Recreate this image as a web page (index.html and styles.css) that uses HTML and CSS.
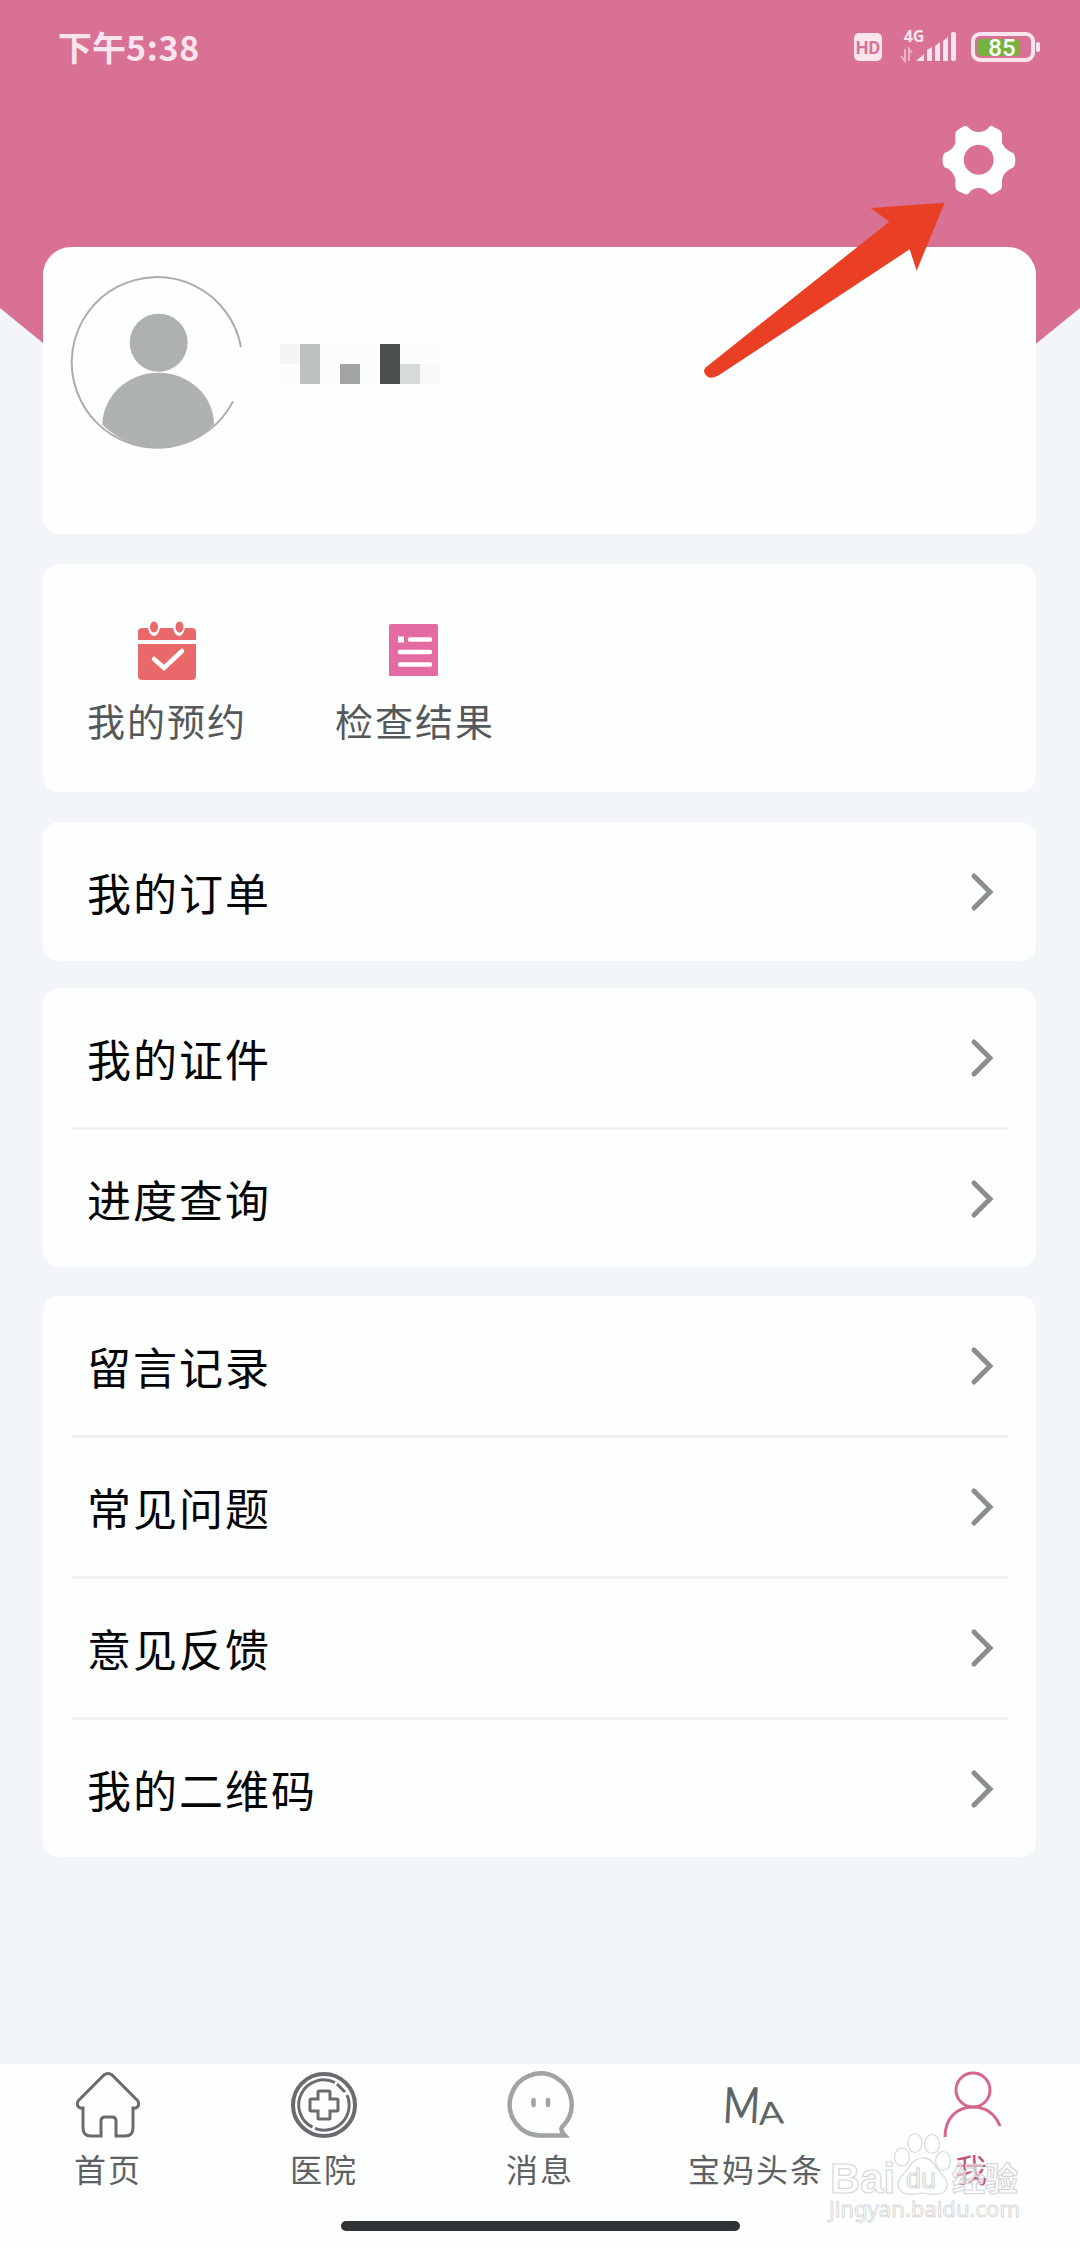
FILE: index.html
```html
<!DOCTYPE html>
<html lang="zh-CN">

<head>
    <meta charset="UTF-8">
    <meta name="viewport" content="width=device-width, initial-scale=1.0">
    <title>我</title>
    <link rel="stylesheet" href="styles.css">
</head>

<body>
    <header class="header">
        <div class="status">
            <span class="time">下午<span class="num">5:38</span></span>
            <svg class="status-icons" width="188" height="36" viewBox="0 0 188 36">
                <rect x="1" y="4" width="28" height="28" rx="5" fill="#fae4ee"/>
                <text x="15" y="24.5" class="hd">HD</text>
                <text x="61" y="13" class="net">4G</text>
                <path d="M52 20v12l-4-5M56 32V20l3 4" fill="none" stroke="#eeb3c9" stroke-width="2"/>
                <path d="M63 32l8-7v7zM74 32V21l5-3v14zM82 32V17l5-4v19zM90 32V12l5-4v24z" fill="#fae4ee"/>
                <rect x="98" y="3" width="5" height="29" rx="2" fill="#fae4ee"/>
                <rect x="120" y="5" width="60" height="26" rx="7" fill="none" stroke="#fae4ee" stroke-width="4"/>
                <rect x="125" y="10" width="41" height="17" rx="3" fill="#76b33e"/>
                <rect x="183" y="13" width="4" height="10" rx="2" fill="#fae4ee"/>
                <text x="149" y="26.5" class="power">85</text>
            </svg>
        </div>
        <svg class="gear" width="74" height="70" viewBox="428 376 222 210">
            <path fill="#fdfeff" fill-rule="evenodd" d="M468 403Q468 395 476 390L493 380Q502 376 508 384Q520 397 538 397Q556 397 567 384Q574 375 582 381L601 391Q608 395 608 403V430Q615 447 634 457Q642 457 645 465Q651 482 645 499Q642 506 634 507Q612 519 608 540V560Q608 568 601 572L582 583Q574 587 567 579Q556 565 538 565Q520 565 510 579Q504 587 496 583L476 574Q468 569 468 560V538Q462 517 444 506Q436 506 433 499Q426 482 433 464Q436 457 444 457Q465 444 468 430ZM538 435a45 45 0 1 0 .1 0z"/>
        </svg>
    </header>

    <main class="main">
        <section class="card profile">
            <svg class="avatar" width="174" height="174" viewBox="124 104 522 522">
                <path d="M634 320A256 256 0 1 0 610 483" fill="none" stroke="#a9adae" stroke-width="6"/>
                <circle cx="387" cy="307" r="87" fill="#adb1b2"/>
                <path d="M218 553C220 465 294 397 386 397C478 397 552 465 553 552Q480 623 386 623Q292 623 218 553z" fill="#adb1b2"/>
            </svg>
            <div class="mosaic">
                <i class="m1"></i><i class="m3"></i><i></i><i></i><i></i><i class="m5"></i><i></i><i></i>
                <i></i><i class="m3"></i><i></i><i class="m4"></i><i></i><i class="m5"></i><i class="m2"></i><i class="m0"></i>
            </div>
        </section>

        <section class="card quick">
            <a class="quick-item">
                <svg width="58" height="60" viewBox="0 0 58 60">
                    <path d="M0 19V11q0-4 4-4h6q2 8 6 8t6-8h13q2 8 6 8t6-8h7q4 0 4 4v8z" fill="#e9696b"/>
                    <ellipse cx="16" cy="6" rx="4" ry="5.5" fill="#e9696b"/>
                    <ellipse cx="41.500" cy="6" rx="4" ry="5.500" fill="#e9696b"/>
                    <path d="M0 23h58v32q0 4-4 4H4q-4 0-4-4z" fill="#e9696b"/>
                    <path d="M16 38l10 9 18-17" fill="none" stroke="#fff" stroke-width="4.500" stroke-linecap="round"/>
                </svg>
                <span>我的预约</span>
            </a>
            <a class="quick-item">
                <svg width="58" height="60" viewBox="0 0 58 60">
                    <rect x="3" y="3" width="49" height="52" rx="1.500" fill="#e36ba2"/>
                    <path d="M12 15.500h6v6h-6z" fill="#fff"/>
                    <path d="M24 18.500h20M14 31h30M14 43.500h30" stroke="#fff" stroke-width="4.500" stroke-linecap="round"/>
                </svg>
                <span>检查结果</span>
            </a>
        </section>

        <section class="card list orders">
            <a class="row">我的订单<svg class="arrow" viewBox="0 0 24 38"><path d="M4 3l16 16L4 35"/></svg></a>
        </section>

        <section class="card list papers">
            <a class="row">我的证件<svg class="arrow" viewBox="0 0 24 38"><path d="M4 3l16 16L4 35"/></svg></a>
            <a class="row">进度查询<svg class="arrow" viewBox="0 0 24 38"><path d="M4 3l16 16L4 35"/></svg></a>
        </section>

        <section class="card list">
            <a class="row">留言记录<svg class="arrow" viewBox="0 0 24 38"><path d="M4 3l16 16L4 35"/></svg></a>
            <a class="row">常见问题<svg class="arrow" viewBox="0 0 24 38"><path d="M4 3l16 16L4 35"/></svg></a>
            <a class="row">意见反馈<svg class="arrow" viewBox="0 0 24 38"><path d="M4 3l16 16L4 35"/></svg></a>
            <a class="row">我的二维码<svg class="arrow" viewBox="0 0 24 38"><path d="M4 3l16 16L4 35"/></svg></a>
        </section>
    </main>

    <nav class="tabs">
        <a class="tab">
            <svg width="66" height="66" viewBox="0 0 66 66">
                <path d="M26 64H16q-8 0-8-8V36H5q-4-2-2-7L29 3q4-3 8 0l26 26q2 5-2 7h-3v20q0 8-8 8h-9V49q0-4-4-4H30q-4 0-4 4z"/>
            </svg>
            <span>首页</span>
        </a>
        <a class="tab">
            <svg width="66" height="66" viewBox="0 0 66 66">
                <circle cx="33" cy="33" r="31" stroke-width="4"/>
                <path d="M44 10.500A25 25 0 1 0 21.500 55.200M24 56.400A25 25 0 0 0 56 23M46 12l8 8"/>
                <path d="M27 20q0-1 1-1h10q1 0 1 1v7h7q1 0 1 1v10q0 1-1 1h-7v7q0 1-1 1H28q-1 0-1-1v-7h-7q-1 0-1-1V28q0-1 1-1h7z"/>
            </svg>
            <span>医院</span>
        </a>
        <a class="tab">
            <svg class="chat" width="66" height="66" viewBox="0 0 66 66">
                <path d="M33 63.500A31 31 0 1 1 55 55q-2 3 3 8.500z" stroke-width="4.500"/>
                <path d="M26.500 28v5M41 28v5" stroke-linecap="round" stroke-width="4.500"/>
            </svg>
            <span>消息</span>
        </a>
        <a class="tab">
            <svg width="68" height="66" viewBox="0 0 68 66">
                <text class="ma" transform="translate(0 51) skewX(-3)" textLength="39" lengthAdjust="spacingAndGlyphs" font-size="50">M</text>
                <text class="ma" transform="translate(37 53) rotate(-4)" textLength="28" lengthAdjust="spacingAndGlyphs" font-size="31">A</text>
            </svg>
            <span>宝妈头条</span>
        </a>
        <a class="tab active">
            <svg width="66" height="66" viewBox="0 0 66 66">
                <circle cx="34" cy="18" r="17"/>
                <path d="M6 65C6 47 17 35 34 35q19 0 27 19"/>
            </svg>
            <span>我</span>
        </a>
    </nav>
    <div class="home-bar"></div>

    <!-- pointer to the settings button -->
    <svg class="pointer" width="242" height="178" viewBox="72 67 726 534">
        <path d="M794 69L710 273L689 209L122 583Q99 598 85 593Q65 578 76 564L628 126L572 85z" fill="#e94025"/>
    </svg>

    <svg class="watermark" width="200" height="100" viewBox="0 0 200 100">
        <text x="2" y="64" class="wm-big" textLength="65" lengthAdjust="spacingAndGlyphs">Bai</text>
        <ellipse cx="74" cy="28" rx="7.500" ry="9"/>
        <ellipse cx="87" cy="14" rx="7" ry="9.500"/>
        <ellipse cx="104" cy="15" rx="7.500" ry="9.500"/>
        <ellipse cx="115" cy="32" rx="7.500" ry="9.500"/>
        <path d="M94 29q8-1 13 8l10 12q5 8-1 14-6 4-22 1-14 3-20-1-7-6-2-14l10-12q4-7 12-8z"/>
        <text x="78" y="59" class="wm-du">du</text>
        <text x="124" y="62" class="wm-cn">经验</text>
        <text x="1" y="88" class="wm-url" textLength="191" lengthAdjust="spacingAndGlyphs">jingyan.baidu.com</text>
    </svg>
</body>

</html>
```

FILE: styles.css
```css
* {
    box-sizing: border-box;
}

body {
    margin: 0;
    position: relative;
    display: flex;
    flex-direction: column;
    width: 1080px;
    height: 2248px;
    overflow: hidden;
    background: #f3f6f8;
    color: #050607;
    font-family: "Noto Sans CJK SC", sans-serif;
}

svg {
    display: block;
    flex: none;
    overflow: visible;
}

.header {
    height: 400px;
    margin-bottom: -153px;
    padding: 29px 39px 0 58px;
    display: flex;
    flex-direction: column;
    background: #d87194;
    clip-path: polygon(0 0, 100% 0, 100% 308px, 967px 400px, 113px 400px, 0 308px);
}

.status {
    display: flex;
    justify-content: space-between;
    height: 36px;
}

.time {
    font-size: 34px;
    line-height: 36px;
    font-weight: 700;
    color: #fae4ee;
}

.num {
    letter-spacing: .7px;
}

.hd, .net, .power {
    font-family: Roboto, sans-serif;
    text-anchor: middle;
}

.hd {
    font-size: 18px;
    font-weight: 700;
    fill: #d87194;
}

.net {
    font-family: "Open Sans", sans-serif;
    font-size: 16px;
    font-weight: 700;
    fill: #fae4ee;
}

.power {
    font-size: 24px;
    font-weight: 500;
    fill: #fff;
}

.gear {
    align-self: flex-end;
    margin: 60px 25px 0 0;
}

.main {
    position: relative;
    flex: 1;
    padding: 0 44px 0 43px;
}

.card {
    background: #fdfefe;
    border-radius: 16px;
}

.profile {
    display: flex;
    height: 287px;
    margin-bottom: 30px;
    padding: 28px;
    border-radius: 28px;
    border-bottom-left-radius: 16px;
    border-bottom-right-radius: 16px;
}

.mosaic {
    display: grid;
    grid-template-columns: repeat(8, 20px);
    grid-auto-rows: 20px;
    align-content: start;
    margin: 69px 0 0 35px;
}

.mosaic i {
    background: #fafcfd;
}

.mosaic .m0 { background: #f9f9fc; }
.mosaic .m1 { background: #f5f5f7; }
.mosaic .m2 { background: #d7dadb; }
.mosaic .m3 { background: #bdc0c1; }
.mosaic .m4 { background: #a1a4a5; }
.mosaic .m5 { background: #4b4f50; }

.quick {
    display: flex;
    gap: 88px;
    height: 228px;
    margin-bottom: 30px;
    padding: 57px 44px 0;
}

.quick-item {
    display: flex;
    flex-direction: column;
    align-items: center;
    gap: 11px;
    width: 160px;
    font-size: 38px;
    line-height: 56px;
    letter-spacing: 2px;
    white-space: nowrap;
    color: #55585a;
}

.list {
    padding: 0 28px 0 29px;
}

.orders {
    margin-bottom: 27px;
}

.papers {
    margin-bottom: 29px;
}

.row {
    display: flex;
    align-items: center;
    justify-content: space-between;
    height: 139px;
    padding: 0 14px 0 15px;
    font-size: 44px;
    letter-spacing: 2px;
}

.row + .row {
    height: 141px;
    border-top: 3px solid #eef0f3;
}

.row + .row:last-child {
    height: 140px;
}

.arrow {
    width: 24px;
    height: 38px;
    fill: none;
    stroke: #8b8e8f;
    stroke-width: 5;
    stroke-linecap: round;
}

.tabs {
    display: grid;
    grid-template-columns: repeat(5, 216px);
    height: 157px;
    padding-top: 8px;
    background: #fdfefe;
}

.tab {
    display: flex;
    flex-direction: column;
    align-items: center;
    gap: 7px;
    font-size: 32px;
    line-height: 46px;
    letter-spacing: 2px;
    color: #5d6163;
    fill: none;
    stroke: #686c6e;
    stroke-width: 3;
}

.chat {
    stroke: #a0a3a4;
}

.ma {
    font-family: Lato, sans-serif;
    fill: #606466;
    stroke: none;
}

.active {
    color: #c25480;
    stroke: #d5668f;
}

.home-bar {
    height: 27px;
    background: #fdfefe;
}

.home-bar::before {
    content: "";
    display: block;
    width: 399px;
    height: 10px;
    margin: 0 auto;
    border-radius: 5px;
    background: #303335;
}

.pointer {
    position: absolute;
    left: 704px;
    top: 202px;
}

.watermark {
    position: absolute;
    left: 828px;
    top: 2129px;
    fill: rgba(255, 255, 255, .5);
    stroke: #d6d8d9;
    stroke-width: 1.2;
}

.wm-big {
    font-family: "Liberation Sans", sans-serif;
    font-size: 43px;
    font-weight: 700;
}

.wm-du {
    font-family: "Liberation Sans", sans-serif;
    font-size: 27px;
}

.wm-cn {
    font-size: 33px;
    font-weight: 700;
}

.wm-url {
    font-family: "Noto Sans", sans-serif;
    font-size: 22px;
    stroke-width: .9;
}
```
